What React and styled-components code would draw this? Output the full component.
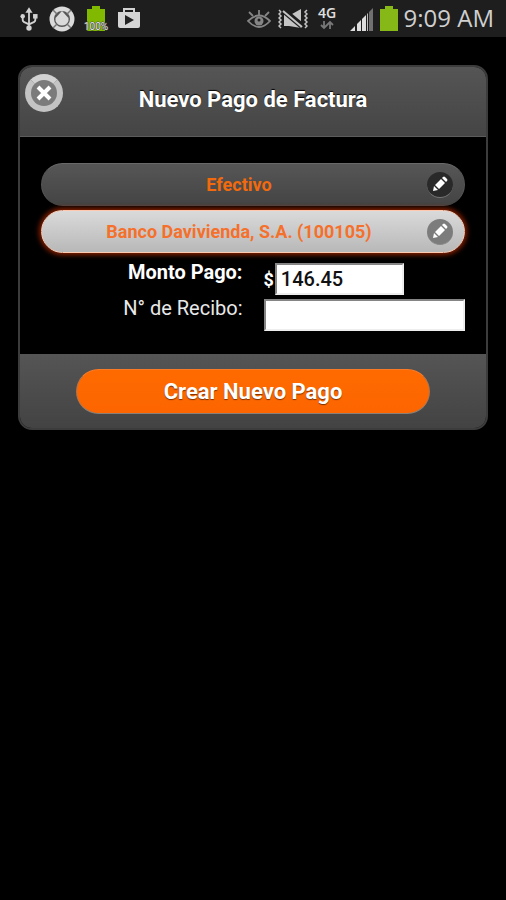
import React, { useState } from "react";
import styled, { createGlobalStyle } from "styled-components";

const GlobalStyle = createGlobalStyle`
  * { box-sizing: border-box; }
  html { background: #000; }
  body { margin: 0; background: #000; color: #fff; font-family: Roboto, "Liberation Sans", sans-serif; }
  button, input { font-family: inherit; }
`;

const StatusBar = styled.header`
  display: flex;
  align-items: center;
  justify-content: space-between;
  height: 37px;
  padding: 0 12px 0 20px;
  background: #1e1e1e;
`;

const StatusGroup = styled.div`
  display: flex;
  align-items: center;
  gap: ${({ $gap }) => $gap}px;
`;

const Clock = styled.time`
  padding-bottom: 2px;
  font-family: "Open Sans", "Noto Sans", sans-serif;
  font-size: 24px;
  line-height: 34px;
  color: #cfcfcf;
  white-space: nowrap;
`;

const Glyph = styled.svg`
  display: block;
  flex: none;
`;

const Main = styled.main`
  padding: 28px 18px;
`;

const Dialog = styled.form`
  border: 2px solid #3c3c3c;
  border-radius: 14px;
  background: #000;
  overflow: hidden;
`;

const DialogHeader = styled.div`
  display: grid;
  grid-template-columns: 48px 1fr 48px;
  height: 70px;
  background: linear-gradient(#555, #454545);
  border-bottom: 1px solid #5c5c5c;
`;

const CloseButton = styled.button`
  display: flex;
  align-items: center;
  justify-content: center;
  width: 38px;
  height: 38px;
  margin: 7px 0 0 5px;
  padding: 0;
  border: 6px solid #c4c4c4;
  border-top-color: #d2d2d2;
  border-radius: 50%;
  background: #7b7b7b;
`;

const Title = styled.h1`
  margin: 0;
  padding-top: 19px;
  font-size: 22px;
  line-height: 28px;
  font-weight: 700;
  text-align: center;
  text-shadow: 0 -1px 1px #000;
`;

const DialogBody = styled.div`
  padding: 26px 21px 23px;
`;

const Options = styled.div`
  display: grid;
  gap: 4px;
`;

const Pill = styled.button`
  display: grid;
  grid-template-columns: 1fr 28px;
  align-items: center;
  width: 100%;
  height: 43px;
  padding: 0 9px;
  border: 1px solid;
  border-radius: 22px;
  border-color: ${({ $active }) => ($active ? "#ffc9b0" : "#696969 #555 #484848")};
  background: ${({ $active }) =>
    $active ? "linear-gradient(#dadada, #b8b8b8)" : "linear-gradient(#565656, #444)"};
  box-shadow: ${({ $active }) => ($active ? "0 0 5px 2px #8a2000" : "none")};
  color: ${({ $active }) => ($active ? "#f5702b" : "#f26a0c")};
  font-size: 18px;
  line-height: 24px;
  font-weight: 700;
`;

const PillLabel = styled.span`
  text-align: center;
`;

const EditBadge = styled.span`
  display: flex;
  align-items: center;
  justify-content: center;
  width: 26px;
  height: 26px;
  border-radius: 50%;
  background: ${({ $active }) => ($active ? "#7c7c7c" : "#292929")};
  border-bottom: 1px solid ${({ $active }) => ($active ? "#8a8a8a" : "#777")};
`;

const Fields = styled.div`
  display: grid;
  gap: 4px;
  margin-top: 10px;
`;

const FieldRow = styled.div`
  display: grid;
  grid-template-columns: 201fr 201fr;
  column-gap: 21px;
  align-items: start;
`;

const FieldLabel = styled.label`
  font-size: 20px;
  line-height: 18px;
  font-weight: ${({ $strong }) => ($strong ? 700 : 400)};
  text-align: right;
  color: ${({ $strong }) => ($strong ? "#fff" : "#e8e8e8")};
`;

const Amount = styled.div`
  display: flex;
  align-items: center;
  gap: 1px;
  font-size: 18px;
  font-weight: 700;
`;

const TextInput = styled.input`
  width: ${({ $short }) => ($short ? "64%" : "100%")};
  min-width: 0;
  height: 32px;
  padding: 0 4px;
  border: 2px solid;
  border-color: #858585 #eee #eee #858585;
  border-radius: 0;
  background: #fff;
  color: #111;
  font-size: 20px;
  font-weight: 500;
`;

const DialogFooter = styled.div`
  display: flex;
  justify-content: center;
  padding: 15px 56px 14px;
  background: linear-gradient(#555, #434343);
`;

const SubmitButton = styled.button`
  width: 100%;
  height: 45px;
  padding: 0;
  border: 1px solid;
  border-color: #fa7b26 #b37650 #8a8078;
  border-radius: 23px;
  background: linear-gradient(#ff6a00, #fc6500);
  color: #fff;
  font-size: 22px;
  line-height: 28px;
  font-weight: 700;
  text-shadow: 0 1px 1px #773000;
`;

const UsbIcon = () => (
  <Glyph width="18" height="26" viewBox="0 0 20 28" fill="none" stroke="#d2d2d2" strokeWidth="2" aria-hidden="true">
    <path d="M10 5V24M3 11v4q0 2 3 3l4 2 4-2q3-1 3-3v-4" />
    <path d="M10 1l4 6H6z" fill="#d2d2d2" stroke="none" />
    <circle cx="3" cy="11" r="2.500" fill="#d2d2d2" stroke="none" />
    <path d="M14.500 8.500h5v5h-5z" fill="#d2d2d2" stroke="none" />
    <circle cx="10" cy="24" r="3" fill="#d2d2d2" stroke="none" />
  </Glyph>
);

const DiscIcon = () => (
  <Glyph width="26" height="26" viewBox="0 0 26 26" aria-hidden="true">
    <circle cx="13" cy="13" r="12.500" fill="#dadada" />
    <circle cx="13" cy="13" r="8" fill="#555" />
    <path d="M13 5l6.500 7v3q-2 4.500-6.500 4.500T6.500 15v-3z" fill="#dadada" />
    <path d="M4 4l4 4M22 4l-4 4M4 22l4-4M22 22l-4-4" stroke="#777" strokeWidth="1.500" />
  </Glyph>
);

const ChargeIcon = () => (
  <Glyph width="26" height="26" viewBox="0 0 26 26" role="img" aria-label="100%">
    <path d="M4 3h5V0h8v3h5v22H4z" fill="#80b900" />
    <text x="13" y="24" textAnchor="middle" fill="#e5e5e5" stroke="#444" strokeWidth="1" paintOrder="stroke" fontFamily="Roboto, sans-serif" fontSize="10">
      100%
    </text>
  </Glyph>
);

const StoreIcon = () => (
  <Glyph width="24" height="24" viewBox="0 0 24 24" aria-hidden="true">
    <path d="M7 6V2h10v4" fill="none" stroke="#d2d2d2" strokeWidth="2" />
    <path d="M1 5h22v14q0 2-2 2H3q-2 0-2-2z" fill="#d5d5d5" />
    <path d="M8 8v10l9-5z" fill="#222" />
  </Glyph>
);

const EyeIcon = () => (
  <Glyph width="24" height="20" viewBox="0 0 24 20" fill="none" stroke="#858585" strokeWidth="1.800" aria-hidden="true">
    <path d="M1 12q11-11 22 0-11 12-22 0z" />
    <circle cx="12" cy="12" r="4.500" fill="#858585" stroke="none" />
    <path d="M12 6V1M6 7L2 3M18 7l4-4" />
    <circle cx="12" cy="11" r="1.500" fill="#1e1e1e" stroke="none" />
  </Glyph>
);

const VibrateIcon = () => (
  <Glyph width="30" height="22" viewBox="0 0 30 22" fill="none" stroke="#c4c4c4" strokeWidth="1.500" aria-hidden="true">
    <path d="M1 2l2 2-2 2 2 2-2 2 2 2-2 2 2 2-2 2 2 2M29 2l-2 2 2 2-2 2 2 2-2 2 2 2-2 2 2 2-2 2" />
    <path d="M6 6v12h5l12 2V1l-9 5z" fill="#c4c4c4" stroke="none" />
    <path d="M5 2l19 16" stroke="#1e1e1e" strokeWidth="6" />
    <path d="M5 3l19 16" stroke="#c4c4c4" strokeWidth="2" />
  </Glyph>
);

const NetworkIcon = () => (
  <Glyph width="24" height="30" viewBox="0 0 24 30" role="img" aria-label="4G">
    <text x="12" y="14" textAnchor="middle" fill="#e0e0e0" fontFamily="Open Sans, sans-serif" fontWeight="600" fontSize="14">
      4G
    </text>
    <path d="M9 17v7M6 21l3 3 3-3M15 25v-7M12 21l3-3 3 3" fill="none" stroke="#777" strokeWidth="1.800" />
  </Glyph>
);

const SignalIcon = () => (
  <Glyph width="24" height="24" viewBox="0 0 24 24" aria-hidden="true">
    <path d="M0 24l5-5v5zM7 24v-7l4-4v11zM12 24V12l4-4v16z" fill="#ddd" />
    <path d="M17 24V7l1-1v18z" fill="#bbb" />
    <path d="M19 24V5l4-4v23z" fill="#707070" />
  </Glyph>
);

const BatteryIcon = () => (
  <Glyph width="18" height="25" viewBox="0 0 18 25" aria-hidden="true">
    <path d="M0 3h5V0h8v3h5v22H0z" fill="#86b817" />
  </Glyph>
);

const CrossIcon = () => (
  <Glyph width="16" height="16" viewBox="0 0 16 16" aria-hidden="true">
    <path d="M2 2l12 12M14 2L2 14" stroke="#fff" strokeWidth="4" />
  </Glyph>
);

const PencilIcon = () => (
  <Glyph width="18" height="18" viewBox="0 0 18 18" fill="#fff" aria-hidden="true">
    <path d="M2 16l1-5 4 4zM4 10l6-6 4 4-6 6zM11 3l1-1q1-1 2 0l2 2q1 1 0 2l-1 1z" />
  </Glyph>
);

const options = ["Efectivo", "Banco Davivienda, S.A. (100105)"];

export default function App() {
  const [selected, setSelected] = useState(1);

  return (
    <>
      <GlobalStyle />
      <StatusBar>
        <StatusGroup $gap={8}>
          <StatusGroup $gap={11}>
            <UsbIcon />
            <DiscIcon />
          </StatusGroup>
          <ChargeIcon />
          <StoreIcon />
        </StatusGroup>
        <StatusGroup $gap={11}>
          <StatusGroup $gap={7}>
            <EyeIcon />
            <VibrateIcon />
            <NetworkIcon />
          </StatusGroup>
          <StatusGroup $gap={6}>
            <SignalIcon />
            <BatteryIcon />
            <Clock>9:09 AM</Clock>
          </StatusGroup>
        </StatusGroup>
      </StatusBar>
      <Main>
        <Dialog onSubmit={(event) => event.preventDefault()}>
          <DialogHeader>
            <CloseButton type="button" aria-label="Cerrar">
              <CrossIcon />
            </CloseButton>
            <Title>Nuevo Pago de Factura</Title>
          </DialogHeader>
          <DialogBody>
            <Options>
              {options.map((option, index) => (
                <Pill
                  key={option}
                  type="button"
                  $active={index === selected}
                  aria-pressed={index === selected}
                  onClick={() => setSelected(index)}
                >
                  <PillLabel>{option}</PillLabel>
                  <EditBadge $active={index === selected}>
                    <PencilIcon />
                  </EditBadge>
                </Pill>
              ))}
            </Options>
            <Fields>
              <FieldRow>
                <FieldLabel htmlFor="amount" $strong>Monto Pago:</FieldLabel>
                <Amount>
                  <span>$</span>
                  <TextInput id="amount" $short defaultValue="146.45" inputMode="decimal" />
                </Amount>
              </FieldRow>
              <FieldRow>
                <FieldLabel htmlFor="receipt">N° de Recibo:</FieldLabel>
                <TextInput id="receipt" />
              </FieldRow>
            </Fields>
          </DialogBody>
          <DialogFooter>
            <SubmitButton type="submit">Crear Nuevo Pago</SubmitButton>
          </DialogFooter>
        </Dialog>
      </Main>
    </>
  );
}
